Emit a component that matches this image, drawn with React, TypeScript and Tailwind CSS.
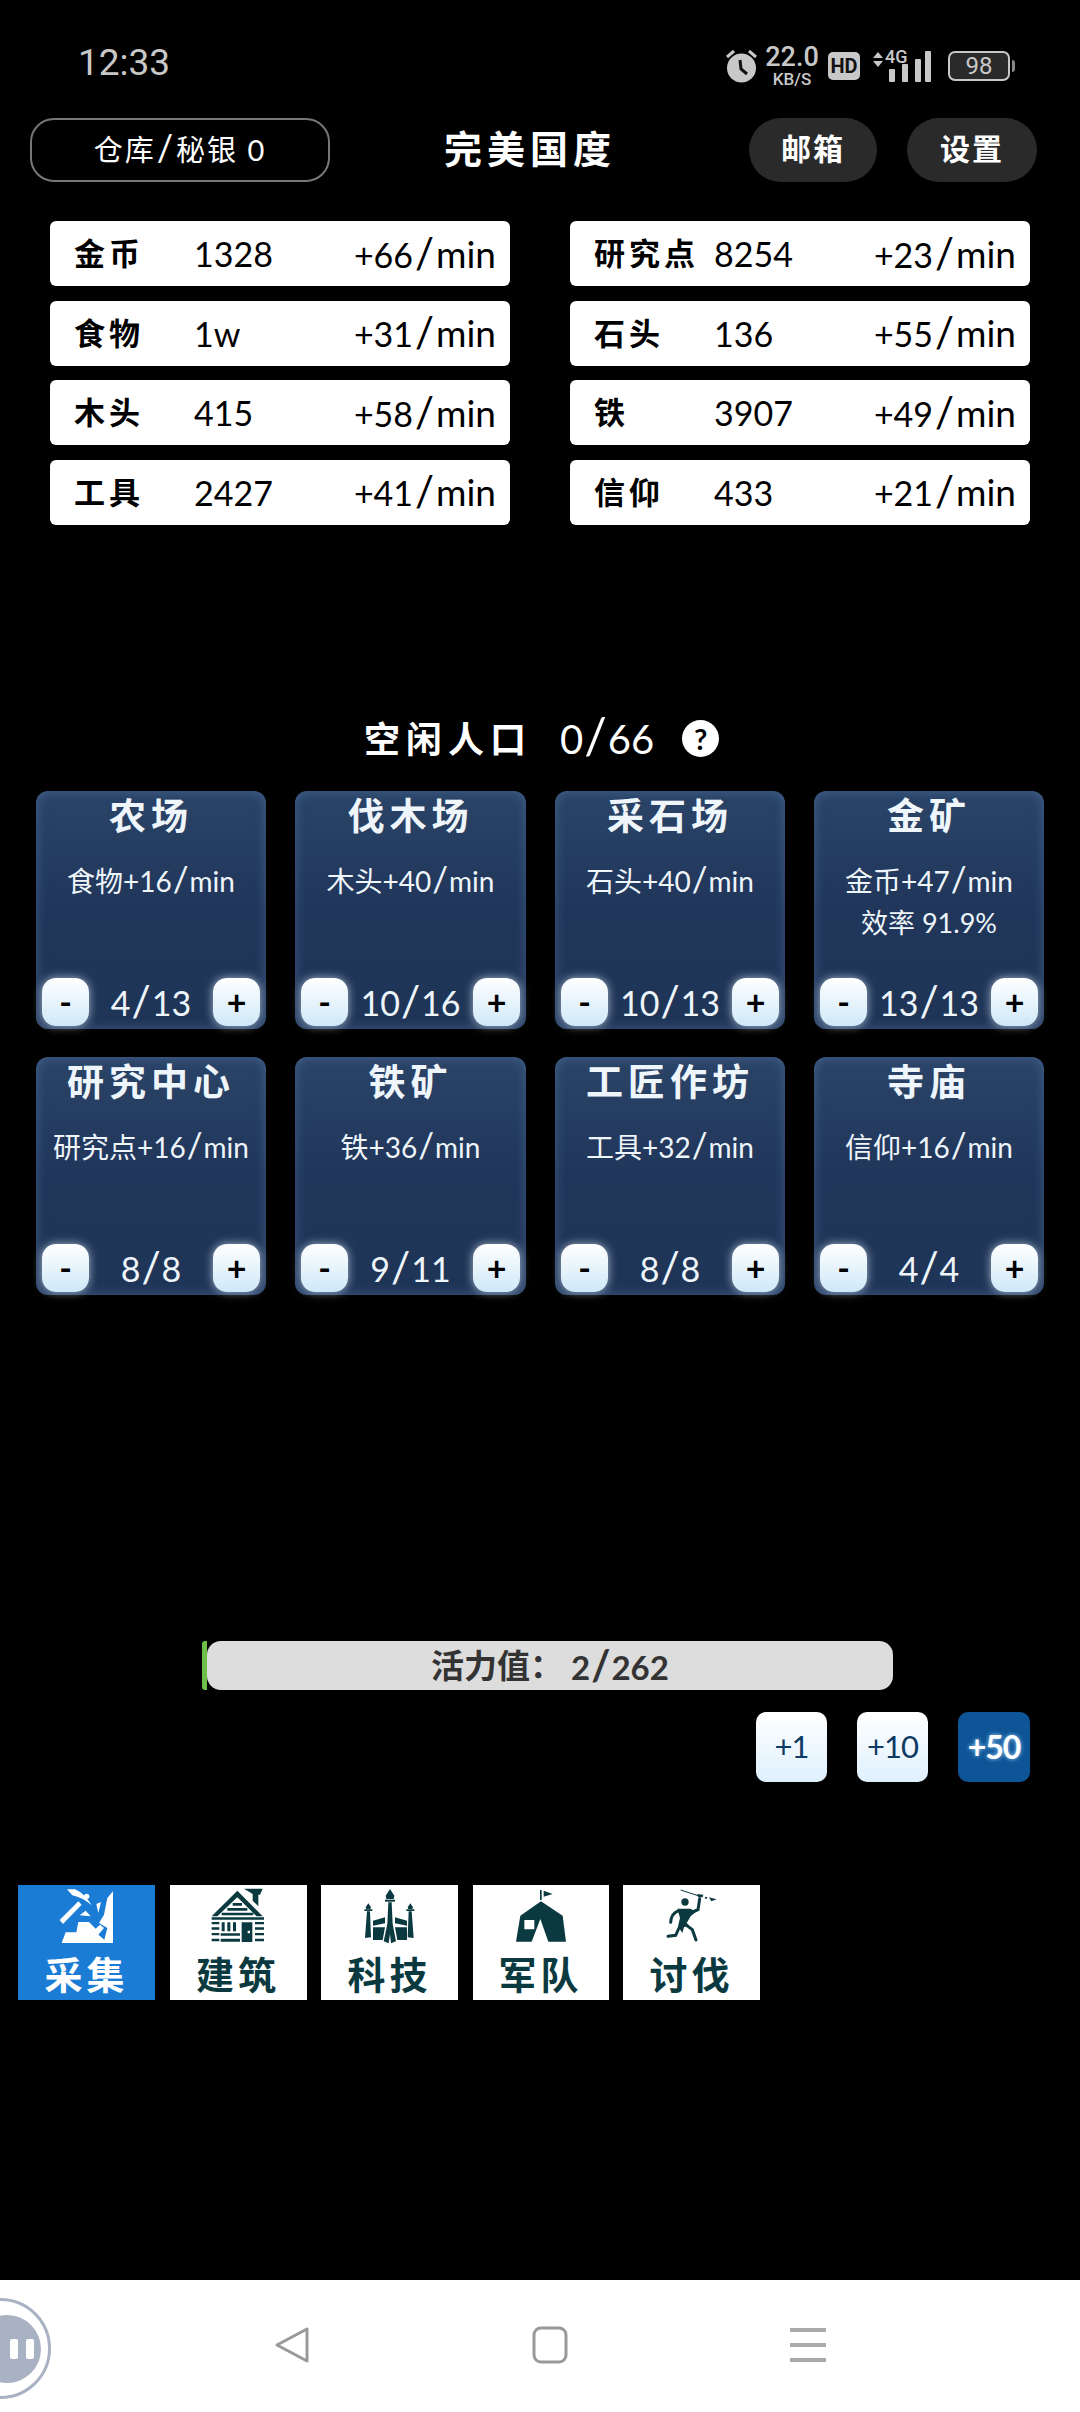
const font = "font-['Lato','Noto_Sans_CJK_SC',sans-serif]";

const resources = [
  ["金币", "1328", "+66/min", "研究点", "8254", "+23/min"],
  ["食物", "1w", "+31/min", "石头", "136", "+55/min"],
  ["木头", "415", "+58/min", "铁", "3907", "+49/min"],
  ["工具", "2427", "+41/min", "信仰", "433", "+21/min"],
];

const buildings = [
  { name: "农场", rate: "食物+16/min", count: "4/13" },
  { name: "伐木场", rate: "木头+40/min", count: "10/16" },
  { name: "采石场", rate: "石头+40/min", count: "10/13" },
  { name: "金矿", rate: "金币+47/min", extra: "效率 91.9%", count: "13/13" },
  { name: "研究中心", rate: "研究点+16/min", count: "8/8" },
  { name: "铁矿", rate: "铁+36/min", count: "9/11" },
  { name: "工匠作坊", rate: "工具+32/min", count: "8/8" },
  { name: "寺庙", rate: "信仰+16/min", count: "4/4" },
];

// the game's font has a big slash
function Slashed({ text }: { text: string }) {
  const [a, b] = text.split("/");
  return (
    <span className="whitespace-nowrap">
      {a}
      <span className="mx-[1px] text-[1.25em] leading-none">/</span>
      {b}
    </span>
  );
}

function ResourceCard({ label, value, rate }: { label: string; value: string; rate: string }) {
  const [amount] = rate.split("/");
  return (
    <div className="flex h-[65px] w-[460px] items-center rounded-[6px] bg-white pl-6 pr-[14px] text-[34px] text-black">
      <span className="w-[120px] shrink-0 whitespace-nowrap text-[31px] font-bold leading-none tracking-[4px]">{label}</span>
      <span>{value}</span>
      <span className="ml-auto whitespace-nowrap">
        {amount}
        <span className="mx-[2px] text-[42px] leading-none">/</span>
        <span className="text-[37px]">min</span>
      </span>
    </div>
  );
}

function StepButton({ label }: { label: string }) {
  return (
    <div className="flex h-[48px] w-[47px] items-center justify-center rounded-[14px] bg-gradient-to-b from-white to-[#cfe8f8] text-[34px] font-bold leading-none text-black shadow-[0_0_10px_rgba(225,240,255,0.7)]">
      {label}
    </div>
  );
}

function BuildingCard({ name, rate, extra, count }: { name: string; rate: string; extra?: string; count: string }) {
  return (
    <div className="flex h-[238px] flex-col items-center rounded-[12px] bg-gradient-to-b from-[#2a4468] via-[#20365a] to-[#1f3557] px-[6px] pb-[1px] pt-[3px] text-[#eef5fb] shadow-[inset_0_0_12px_rgba(120,160,210,0.35)]">
      <div className="whitespace-nowrap text-[37px] font-bold leading-[44px] tracking-[5px]">{name}</div>
      <div className="mt-[23px] text-[28px] leading-[40px]">
        <Slashed text={rate} />
      </div>
      {extra && <div className="whitespace-nowrap text-[27px] leading-[44px]">{extra}</div>}
      <div className="mt-auto flex w-full items-center justify-between">
        <StepButton label="-" />
        <span className="text-[34px]">
          <Slashed text={count} />
        </span>
        <StepButton label="+" />
      </div>
    </div>
  );
}

function AlarmIcon() {
  return (
    <svg width="31" height="34" viewBox="0 0 31 34">
      <path d="M1 8 8 2M30 8 23 2" stroke="#c8c8c8" strokeWidth="3" />
      <circle cx="15.5" cy="19" r="14.5" fill="#c8c8c8" />
      <path d="M14 11 15 20 21 25" stroke="#111" strokeWidth="3" fill="none" />
    </svg>
  );
}

function SignalIcon() {
  return (
    <svg width="60" height="31" viewBox="0 0 60 31">
      <path d="M1 7 6 1 11 7ZM1 10 6 16 11 10Z" fill="#c8c8c8" />
      <rect x="17" y="18" width="6" height="13" rx="1" fill="#c8c8c8" />
      <rect x="30" y="13" width="6" height="18" rx="1" fill="#c8c8c8" />
      <rect x="43" y="8" width="6" height="23" rx="1" fill="#c8c8c8" />
      <rect x="53" y="0" width="6" height="31" rx="1" fill="#c8c8c8" />
    </svg>
  );
}

function GatherIcon() {
  return (
    <svg width="56" height="56" viewBox="60 10 168 168" fill="white">
      <path d="M222 20V175H68L80 143H112L118 112H150L170 132 183 120 195 130 178 150 196 165 205 130 180 115 195 90 205 40Z" />
      <path d="M84 14H108Q135 25 158 62 130 38 100 32Z" />
      <path d="M118 50 128 60 72 118 62 106Z" />
      <circle cx="143" cy="35" r="8" />
      <path d="M122 92 140 78 155 95ZM172 58 186 52 178 85Z" />
    </svg>
  );
}

function HouseIcon() {
  return (
    <svg width="56" height="56" viewBox="510 10 168 168" fill="#0a3a40">
      <path d="M592 18 668 95H650L592 38 532 95H515Z" />
      <path d="M612 12H668L660 30H655V65L638 48V28Z" />
      <path d="M578 55H606V63H578ZM562 70H622V78H562ZM545 84H640V92H545ZM515 98H672V105H515Z" />
      <path d="M515 112H538V119H515ZM515 128H538V135H515ZM515 145H538V152H515ZM515 162H538V170H515Z" />
      <path d="M545 113H554V140H545ZM562 113H571V140H562ZM579 113H588V140H579Z" />
      <path d="M542 146H600V153H542ZM542 162H600V171H542Z" />
      <path d="M605 113H637V172H605ZM623 138V146H630V138Z" fillRule="evenodd" />
      <path d="M645 112H672V119H645ZM645 128H672V135H645ZM645 145H672V152H645ZM645 162H672V170H645Z" />
    </svg>
  );
}

function TowerIcon() {
  return (
    <svg width="56" height="56" viewBox="63 12 168 168" fill="#0a3a40">
      <path d="M147 15 160 35 158 45H136L134 35Z" />
      <path d="M132 47H162V53H132Z" />
      <path d="M142 55H152L155 120 165 172 150 178 147 150 143 178 128 172 139 120Z" />
      <path d="M82 58 90 70 88 75H76L74 70ZM70 76H94V81H70ZM78 82H87L90 160 72 162Z" />
      <path d="M208 58 216 70 214 75H202L200 70ZM196 76H220V81H196ZM203 82H212L218 162 200 160Z" />
      <path d="M96 110 132 100V118L96 125ZM96 130H132L125 168H96Z" />
      <path d="M198 110 162 100V118L198 125ZM198 130H162L169 168H198Z" />
    </svg>
  );
}

function TentIcon() {
  return (
    <svg width="56" height="56" viewBox="516 12 168 168" fill="#0a3a40">
      <path d="M597 18H602V48H597ZM608 20 635 30 608 38Z" />
      <path d="M600 52 665 95 675 173H622L598 105 572 173H525L538 95ZM550 108V136H580V108Z" fillRule="evenodd" />
    </svg>
  );
}

function WarriorIcon() {
  return (
    <svg width="56" height="56" viewBox="70 10 168 168" fill="#0a3a40" stroke="none">
      <circle cx="133" cy="52" r="11" />
      <path d="M120 16 172 33" stroke="#0a3a40" strokeWidth="3" />
      <path d="M170 28 188 30 186 38 172 38ZM194 36 200 38 198 43 192 41ZM205 38 228 44 212 50Z" />
      <path d="M110 72H150L165 82 150 95 138 115 145 122 130 128 125 145 112 125 118 100Z" />
      <g fill="none" stroke="#0a3a40" strokeWidth="9" strokeLinecap="round">
        <path d="M90 113Q92 85 115 78" />
        <path d="M115 130 105 152 82 155" />
        <path d="M135 120 155 135 166 166" />
        <path d="M155 82 172 75 177 42" />
      </g>
    </svg>
  );
}

const tabs = [
  { label: "采集", icon: <GatherIcon />, active: true, width: "w-[137px]" },
  { label: "建筑", icon: <HouseIcon />, width: "w-[137px]" },
  { label: "科技", icon: <TowerIcon />, width: "w-[137px]" },
  { label: "军队", icon: <TentIcon />, width: "w-[136px]" },
  { label: "讨伐", icon: <WarriorIcon />, width: "w-[137px]" },
];

export default function App() {
  return (
    <div className={`relative flex h-[2412px] w-[1080px] flex-col overflow-hidden bg-black ${font}`}>
      {/* status bar */}
      <div className="flex h-[118px] items-start justify-between pl-[78px] pr-[65px] pt-[39px]">
        <span className="font-['Roboto'] text-[37px] leading-[48px] text-[#c8c8c8]">12:33</span>
        <div className="mt-[5px] flex items-center text-[#c8c8c8]">
          <AlarmIcon />
          <div className="ml-[10px] flex w-[50px] flex-col items-center font-['Roboto'] font-medium">
            <span className="text-[27px] leading-[27px]">22.0</span>
            <span className="text-[17px] leading-[17px]">KB/S</span>
          </div>
          <span className="ml-[11px] flex h-[28px] w-[32px] items-center justify-center rounded-[5px] bg-[#c8c8c8] font-['Roboto'] text-[20px] font-bold text-[#111]">HD</span>
          <div className="relative ml-[12px]">
            <SignalIcon />
            <span className="absolute left-[13px] top-[-3px] font-['Roboto'] text-[18px] font-medium leading-[18px]">4G</span>
          </div>
          <div className="ml-[16px] flex items-center">
            <span className="flex h-[30px] w-[62px] items-center justify-center rounded-[7px] border-2 border-[#c8c8c8] bg-[#2a2a2a] font-['Roboto'] text-[24px] leading-none">98</span>
            <span className="ml-[2px] h-[12px] w-[3px] rounded-r bg-[#888]" />
          </div>
        </div>
      </div>

      {/* top bar */}
      <div className="relative flex h-[64px] items-center pl-[30px] pr-[43px]">
        <div className="flex h-full w-[300px] items-center justify-center rounded-[24px] border-2 border-[#777] text-[29px] tracking-[2px] text-white">
          <Slashed text="仓库/秘银 0" />
        </div>
        <div className="ml-[114px] pb-[4px] text-[38px] font-bold tracking-[5px] text-white">完美国度</div>
        <div className="ml-auto flex gap-[30px]">
          <div className="flex h-[64px] w-[128px] items-center justify-center rounded-[32px] bg-[#2a2a2a] pb-[3px] text-[30px] font-bold tracking-[2px] text-white">邮箱</div>
          <div className="flex h-[64px] w-[130px] items-center justify-center rounded-[32px] bg-[#2a2a2a] pb-[3px] text-[30px] font-bold tracking-[2px] text-white">设置</div>
        </div>
      </div>

      {/* resources */}
      <div className="mt-[39px] grid grid-cols-[460px_460px] gap-x-[60px] gap-y-[14.5px] pl-[50px]">
        {resources.map((r) => (
          <div key={r[0]} className="contents">
            <ResourceCard label={r[0]} value={r[1]} rate={r[2]} />
            <ResourceCard label={r[3]} value={r[4]} rate={r[5]} />
          </div>
        ))}
      </div>

      {/* idle population */}
      <div className="mt-[184px] flex h-[60px] items-center pl-[364px] text-white">
        <span className="text-[36px] font-bold tracking-[6px]">空闲人口</span>
        <span className="ml-[28px] text-[40px]">
          <Slashed text="0/66" />
        </span>
        <span className="ml-[28px] flex h-[37px] w-[37px] items-center justify-center rounded-full bg-white text-[29px] font-bold text-black">?</span>
      </div>

      {/* buildings */}
      <div className="mt-[22px] grid grid-cols-[230px_231px_230px_230px] gap-x-[29px] gap-y-[28px] pl-[36px]">
        {buildings.map((b) => (
          <BuildingCard key={b.name} {...b} />
        ))}
      </div>

      {/* stamina */}
      <div className="ml-[202px] mt-[346px] flex h-[49px] w-[691px]">
        <div className="h-full w-[5px] rounded-l-[3px] bg-[#6cc04a]" />
        <div className="flex flex-1 items-center justify-center rounded-[14px] bg-[#dddddd] text-[33px] font-bold leading-none text-[#333]">
          活力值：&nbsp;
          <Slashed text="2/262" />
        </div>
      </div>

      <div className="mt-[22px] flex justify-end gap-[30px] pr-[50px]">
        <div className="flex h-[70px] w-[71px] items-center justify-center rounded-[10px] bg-gradient-to-b from-white to-[#dff0fd] text-[31px] tracking-[-1px] text-[#0e3a63]">+1</div>
        <div className="flex h-[70px] w-[71px] items-center justify-center rounded-[10px] bg-gradient-to-b from-white to-[#dff0fd] text-[31px] tracking-[-1px] text-[#0e3a63]">+10</div>
        <div className="flex h-[70px] w-[72px] items-center justify-center rounded-[10px] bg-[#0d5596] text-[32px] font-bold tracking-[-1px] text-white [text-shadow:0_0_4px_#9fd0ff]">+50</div>
      </div>

      {/* tabs */}
      <div className="mt-[103px] flex gap-[14.5px] pl-[18px]">
        {tabs.map((t) => (
          <div
            key={t.label}
            className={`flex h-[115px] ${t.width} flex-col items-center ${t.active ? "bg-[#1b7cd6] text-white" : "bg-white text-[#0a3a40]"}`}
          >
            <div className="flex h-[64px] items-start pt-[3px]">{t.icon}</div>
            <div className="text-[38px] font-bold leading-[50px] tracking-[4px]">{t.label}</div>
          </div>
        ))}
      </div>

      {/* nav bar */}
      <div className="absolute bottom-0 left-0 flex h-[132px] w-full items-center justify-center gap-[222px] bg-white pb-[2px] pl-[20px]">
        <svg width="36" height="38" viewBox="0 0 36 38" fill="none" stroke="#999" strokeWidth="3" strokeLinejoin="round">
          <path d="M33 3V35L3 19Z" />
        </svg>
        <svg width="36" height="38" viewBox="0 0 36 38" fill="none" stroke="#999" strokeWidth="3">
          <rect x="2" y="2" width="32" height="34" rx="7" />
        </svg>
        <svg width="36" height="38" viewBox="0 0 36 38" fill="#aaa">
          <path d="M0 2H36V6H0ZM0 17H36V21H0ZM0 32H36V36H0Z" />
        </svg>
        <div className="absolute left-[-50px] top-[18px] flex h-[101px] w-[101px] items-center rounded-full border-[3px] border-[#a8b2c2] bg-white pl-[20px]">
          <div className="flex h-[68px] w-[68px] shrink-0 items-center gap-[8px] rounded-full bg-[#a8b2c2] pl-[37px]">
            <span className="h-[20px] w-[8px] shrink-0 rounded-[2px] bg-white" />
            <span className="h-[20px] w-[8px] shrink-0 rounded-[2px] bg-white" />
          </div>
        </div>
      </div>
    </div>
  );
}
